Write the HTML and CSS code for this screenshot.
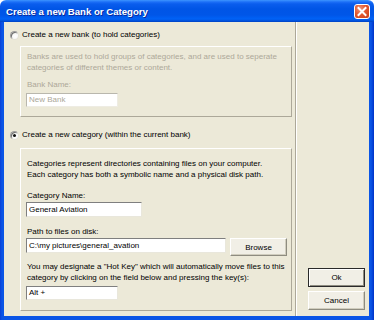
FILE: index.html
```html
<!DOCTYPE html>
<html>
<head>
<meta charset="utf-8">
<link rel="stylesheet" href="styles.css">
</head>
<body>
<div class="window">
  <div class="titlebar">
    <span class="title">Create a new Bank or Category</span>
    <span class="close">
      <svg width="14" height="13" viewBox="0 0 14 13"><path d="M3.5 3 L10.5 10 M10.5 3 L3.5 10" stroke="#fff" stroke-width="2" stroke-linecap="square"/></svg>
    </span>
  </div>
  <div class="frame">
    <div class="client">
      <div class="main">
        <div class="radio-row"><span class="radio"></span>Create a new bank (to hold categories)</div>
        <div class="group group-bank disabled">
          <p class="text">Banks are used to hold groups of categories, and are used to seperate<br>categories of different themes or content.</p>
          <p class="text label">Bank Name:</p>
          <div class="field field-disabled w-short">New Bank</div>
        </div>
        <div class="radio-row row-second"><span class="radio checked"></span>Create a new category (within the current bank)</div>
        <div class="group group-cat">
          <p class="text">Categories represent directories containing files on your computer.<br>Each category has both a symbolic name and a physical disk path.</p>
          <p class="text label label-cat">Category Name:</p>
          <div class="field tall w-mid">General Aviation</div>
          <p class="text label label-path">Path to files on disk:</p>
          <div class="path-row">
            <div class="field tall w-long">C:\my pictures\general_avation</div>
            <button class="btn btn-browse">Browse</button>
          </div>
          <p class="text hotkey">You may designate a "Hot Key" which will automatically move files to this<br>category by clicking on the field below and pressing the key(s):</p>
          <div class="field w-short field-alt">Alt +</div>
        </div>
      </div>
      <div class="side">
        <button class="btn btn-default">Ok</button>
        <button class="btn">Cancel</button>
      </div>
    </div>
  </div>
</div>
</body>
</html>
```

FILE: styles.css
```css
* { box-sizing: border-box; }
html, body { margin: 0; padding: 0; background: #ffffff; }
body {
  font-family: "Liberation Sans", Arial, sans-serif;
  font-size: 8px;
  color: #000;
}
.window {
  width: 374px;
  height: 320px;
  display: flex;
  flex-direction: column;
  overflow: hidden;
  border-radius: 6px 6px 0 0;
}
.titlebar {
  height: 22px;
  flex: none;
  display: flex;
  align-items: center;
  justify-content: space-between;
  padding: 0 4px 0 6px;
  background: linear-gradient(to bottom, #3d95ff 0px, #1c6ff7 2px, #0a5ded 4px, #0055e6 9px, #0056e8 15px, #0062f6 19px, #004fd8 21px, #003fc0 22px);
}
.title {
  color: #fff;
  font-weight: bold;
  font-size: 9.6px;
  text-shadow: 1px 1px 0 #0a2a9c;
  letter-spacing: 0;
}
.close {
  width: 16px;
  height: 15px;
  border: 1px solid #fff;
  border-radius: 3px;
  background: radial-gradient(circle at 35% 30%, #f0967a 0%, #e2582e 45%, #c9401a 100%);
  display: flex;
  align-items: center;
  justify-content: center;
}
.close svg { display: block; }
.frame {
  flex: 1;
  display: flex;
  padding: 0 5px 4px 4px;
  background: linear-gradient(to right, #0a3fd6 0px, #0a55e6 2px, #0a55e6 calc(100% - 3px), #0033c8 100%);
}
.client {
  flex: 1;
  display: flex;
  background: #ece9d8;
}
.main {
  width: 292px;
  padding: 7px 0 0 6px;
  border-right: 1px solid #aca899;
  display: flex;
  flex-direction: column;
}
.radio-row {
  height: 12px;
  display: flex;
  align-items: center;
  line-height: 12px;
}
.row-second { margin-top: 12px; }
.radio {
  width: 9px;
  height: 9px;
  border-radius: 50%;
  margin-right: 3px;
  border: 1px solid #9d9d9d;
  border-right-color: #e4e2d6;
  border-bottom-color: #e4e2d6;
  background: radial-gradient(circle at 60% 60%, #ffffff 0%, #f6f6f3 60%, #d9d7cc 100%);
  box-shadow: inset 1px 1px 0 #6f6f6f;
  display: flex;
  align-items: center;
  justify-content: center;
}
.radio.checked::after {
  content: "";
  width: 3px;
  height: 3px;
  border-radius: 50%;
  background: #111;
}
.group {
  width: 272px;
  margin-left: 10px;
  border: 1px solid;
  border-color: #ffffff #aca899 #aca899 #ffffff;
  padding-left: 5px;
}
.group-bank {
  margin-top: 5px;
  padding-top: 4px;
  padding-bottom: 9px;
}
.group-cat {
  margin-top: 7px;
  padding-top: 9px;
  padding-bottom: 10px;
}
.text {
  margin: 0 0 0 1px;
  line-height: 11px;
  white-space: nowrap;
}
.disabled .text { color: #aca899; }
.label { margin-top: 6px; }
.group-bank .label { margin-bottom: 3px; }
.label-cat { margin-top: 10px; margin-bottom: 1px; }
.label-path { margin-top: 9px; margin-bottom: 1px; }
.field {
  height: 14px;
  background: #fff;
  border: 1px solid;
  border-color: #7f7f7f #e9e7dc #e9e7dc #7f7f7f;
  padding-left: 2px;
  line-height: 12px;
  white-space: nowrap;
  overflow: hidden;
}
.field.tall { height: 15px; line-height: 13px; }
.field-disabled { color: #aca899; border-color: #b9b7ad #eeece3 #eeece3 #b9b7ad; }
.w-short { width: 92px; }
.w-mid { width: 116px; }
.w-long { width: 200px; }
.path-row {
  display: flex;
  align-items: flex-start;
  gap: 4px;
}
.hotkey { margin-top: 5px; }
.field-alt { margin-top: 3px; }
.btn {
  font-family: "Liberation Sans", Arial, sans-serif;
  font-size: 8px;
  color: #000;
  width: 57px;
  height: 19px;
  padding: 0;
  background: #f1efe6;
  border: 1px solid;
  border-color: #ffffff #8e8c80 #8e8c80 #ffffff;
  box-shadow: inset -1px -1px 0 #d0cdbe;
}
.btn-browse { height: 18px; }
.btn-default {
  border: 1px solid #2a2a2a;
  box-shadow: inset 1px 1px 0 #fff, inset -1px -1px 0 #8e8c80;
}
.side {
  flex: 1;
  border-left: 1px solid #ffffff;
  display: flex;
  flex-direction: column;
  justify-content: flex-end;
  gap: 4px;
  padding: 0 0 6px 11px;
}
```
